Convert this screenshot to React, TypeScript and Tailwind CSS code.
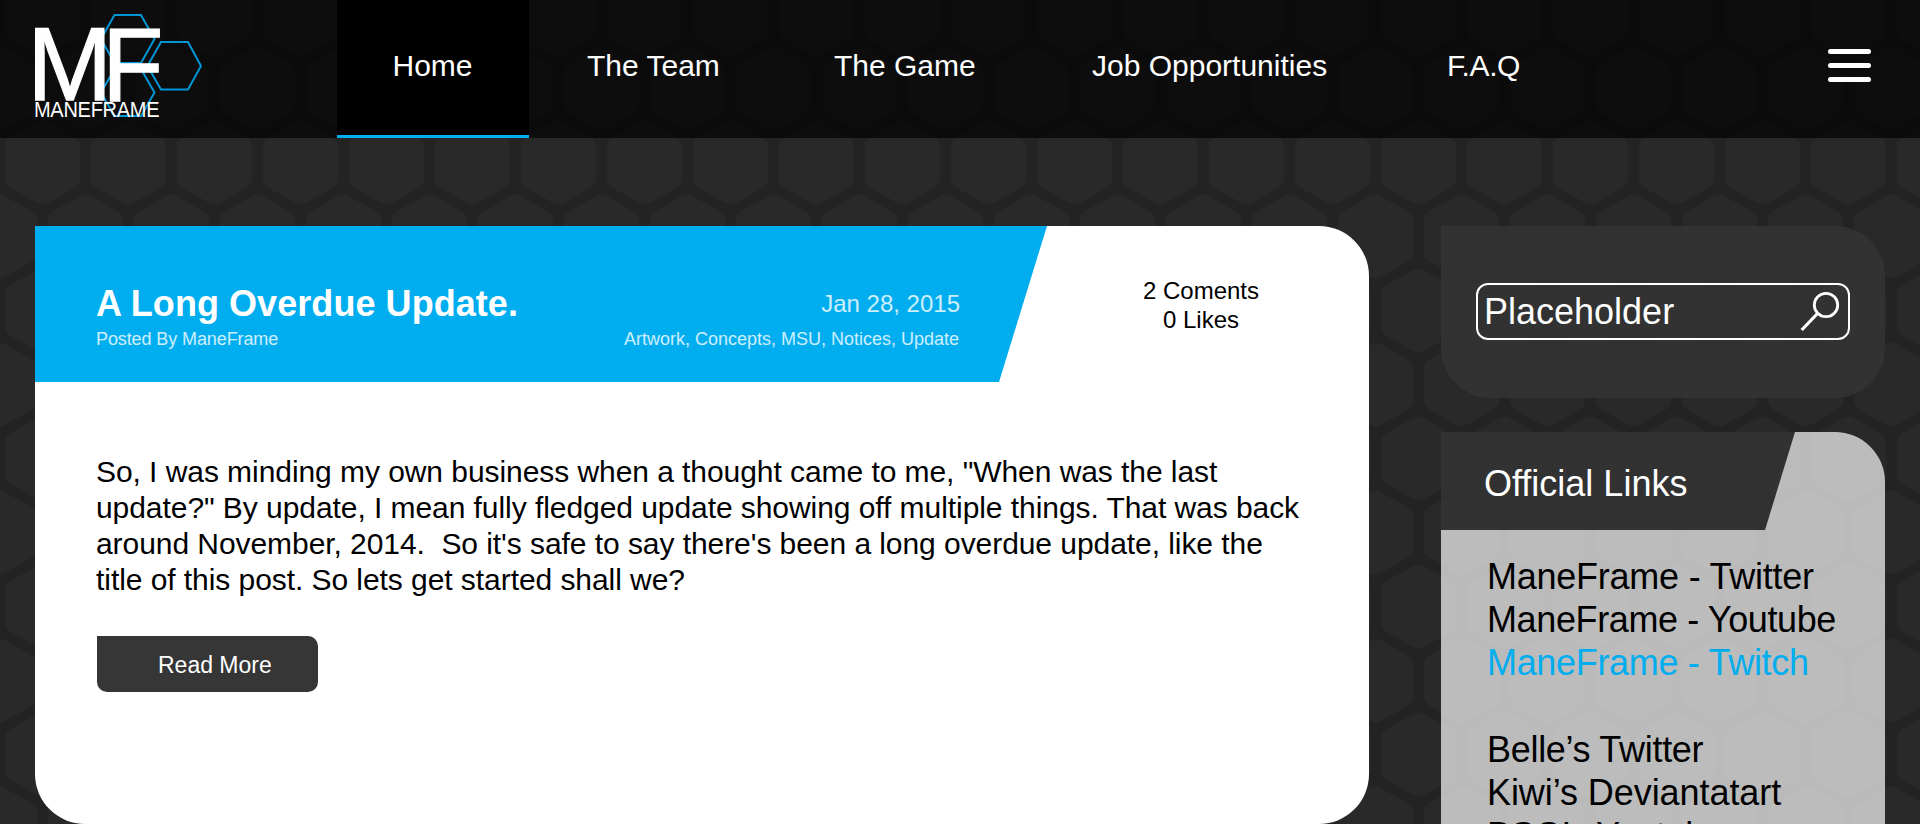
const nav = [
  { label: 'The Team', cls: 'ml-[58px] w-[247px]' },
  { label: 'The Game', cls: 'w-[258px]' },
  { label: 'Job Opportunities', cls: 'w-[355px]' },
  { label: 'F.A.Q', cls: 'tracking-[-0.4px]' },
];

const links = [
  { label: 'ManeFrame - Twitter', cls: 'tracking-[-0.24px]' },
  { label: 'ManeFrame - Youtube', cls: 'tracking-[-0.38px]' },
  { label: 'ManeFrame - Twitch', cls: 'tracking-[-0.32px] text-[#00adef]' },
  { label: '\u00a0', cls: '' },
  { label: 'Belle’s Twitter', cls: 'tracking-[-0.3px]' },
  { label: 'Kiwi’s Deviantatart', cls: 'tracking-[-0.07px]' },
  { label: 'BSG’s Youtube', cls: 'tracking-[-0.3px]' },
];

function HexBackground() {
  const hex = 'M0 -29.73 L25.75 -14.87 V14.87 L0 29.73 L-25.75 14.87 V-14.87 Z';
  return (
    <svg className="absolute inset-0 -z-10 h-full w-full" aria-hidden="true">
      <defs>
        <pattern id="hexes" width="86" height="148" patternUnits="userSpaceOnUse" x="-0.5" y="14.5">
          <g fill="#292929" stroke="#292929" strokeWidth="24" strokeLinejoin="round">
            <path d={hex} transform="translate(43 0)" />
            <path d={hex} transform="translate(43 148)" />
            <path d={hex} transform="translate(0 74)" />
            <path d={hex} transform="translate(86 74)" />
          </g>
        </pattern>
      </defs>
      <rect width="100%" height="100%" fill="#232323" />
      <rect width="100%" height="100%" fill="url(#hexes)" />
    </svg>
  );
}

function Logo() {
  return (
    <svg className="h-[138px] w-[337px] shrink-0" viewBox="0 0 337 138" fontFamily="Liberation Sans, Arial, sans-serif">
      <g fill="none" stroke="#0096d6" strokeWidth="2">
        <path d="M114.5 15 H141 L154.5 39 L141 63 H114.5 L101 39 Z" />
        <path d="M161 42 H188 L201 66 L188 89.5 H161 L147.5 66 Z" />
        <path d="M114.5 69 H141 L154.5 92.5 L141 116 H114.5 L101 92.5 Z" />
      </g>
      <g fill="#fff">
        <text fontSize="100" stroke="#fff" strokeWidth="1.2" transform="translate(27.200 99.500) scale(1.02 1.045)">M</text>
        <text fontSize="100" stroke="#fff" strokeWidth="1.2" transform="translate(102.300 100.500) scale(1 1.045)">F</text>
        <text fontSize="20" transform="translate(34 117) scale(1 1.07)" textLength="125.5">MANEFRAME</text>
      </g>
    </svg>
  );
}

export default function App() {
  return (
    <div className="relative isolate h-[824px] w-[1920px] overflow-hidden font-['Liberation_Sans',Arial,sans-serif] text-black">
      <HexBackground />

      <header className="flex h-[138px] bg-black/68 text-[30px] text-white">
        <Logo />
        <a className="flex w-[192px] shrink-0 items-center border-b-[3px] border-[#00adef] bg-black pb-[4px] pl-[55.500px]">Home</a>
        <nav className="flex flex-1 items-center pb-[7px]">
          {nav.map((n) => (
            <a key={n.label} className={`shrink-0 whitespace-nowrap ${n.cls}`}>
              {n.label}
            </a>
          ))}
        </nav>
        <button className="mt-[49px] mr-[49px] flex h-[33px] w-[43px] flex-col justify-between" aria-label="Menu">
          <span className="h-[5px] w-full rounded-full bg-white" />
          <span className="h-[5px] w-full rounded-full bg-white" />
          <span className="h-[5px] w-full rounded-full bg-white" />
        </button>
      </header>

      <main className="flex items-start gap-[72px] pt-[88px] pl-[35px]">
        <article className="h-[598px] w-[1334px] overflow-hidden rounded-[50px] rounded-tl-none bg-white">
          <div className="flex h-[156px]">
            <div className="flex w-[1012px] justify-between bg-[#00adef] pt-[57px] pr-[87px] pl-[61px] [clip-path:polygon(0_0,100%_0,964px_100%,0_100%)]">
              <div>
                <h1 className="text-[36px] leading-[42px] font-bold tracking-[0.06px] whitespace-nowrap text-white">A Long Overdue Update.</h1>
                <p className="mt-[4px] text-[18px] leading-[20px] tracking-[-0.1px] text-white/80">Posted By ManeFrame</p>
              </div>
              <div className="text-right text-white/80">
                <p className="text-[24px] leading-[42px]">Jan 28, 2015</p>
                <p className="mt-[4px] mr-px text-[18px] leading-[20px]">Artwork, Concepts, MSU, Notices, Update</p>
              </div>
            </div>
            <div className="w-[308px] pt-[50px] text-center text-[24px] leading-[29px]">
              <p>2 Coments</p>
              <p>0 Likes</p>
            </div>
          </div>
          <p className="mt-[72px] ml-[61px] text-[30px] leading-[36px] tracking-[-0.062px] whitespace-pre">
            {`So, I was minding my own business when a thought came to me, "When was the last
update?" By update, I mean fully fledged update showing off multiple things. That was back
around November, 2014.  So it's safe to say there's been a long overdue update, like the
title of this post. So lets get started shall we?`}
          </p>
          <button className="mt-[38px] ml-[62px] block h-[56px] w-[221px] rounded-[10px] rounded-tl-none bg-[#363636] pt-[2px] pl-[61px] text-left text-[23px] text-white">
            Read More
          </button>
        </article>

        <aside className="w-[444px] text-[36px] text-white">
          <div className="h-[172px] rounded-[50px] rounded-tl-none bg-[#343434]/80 pt-[57px] pl-[35px]">
            <div className="flex h-[57px] w-[374px] items-center justify-between rounded-[12px] border-2 border-white pr-[8px] pl-[6px]">
              <span className="leading-[42px]">Placeholder</span>
              <svg className="h-[41px] w-[41px]" viewBox="0 0 41 41" fill="none" stroke="#fff" strokeWidth="2.8">
                <circle cx="27" cy="14" r="11.7" />
                <path d="M18.5 22.5 L2.7 39" strokeWidth="3.2" />
              </svg>
            </div>
          </div>

          <section className="mt-[34px] h-[420px] overflow-hidden rounded-tr-[50px]">
            <div className="flex h-[98px]">
              <h2 className="w-[354px] bg-[#343434]/80 pt-[31px] pl-[43px] leading-[42px] [clip-path:polygon(0_0,100%_0,324px_100%,0_100%)]">
                Official Links
              </h2>
              <div className="-ml-[30px] flex-1 bg-white/69 [clip-path:polygon(30px_0,100%_0,100%_100%,0_100%)]" />
            </div>
            <ul className="h-[322px] bg-white/69 pt-[25px] pl-[46px] leading-[43.200px] text-black">
              {links.map((l) => (
                <li key={l.label} className={l.cls}>
                  {l.label}
                </li>
              ))}
            </ul>
          </section>
        </aside>
      </main>
    </div>
  );
}
